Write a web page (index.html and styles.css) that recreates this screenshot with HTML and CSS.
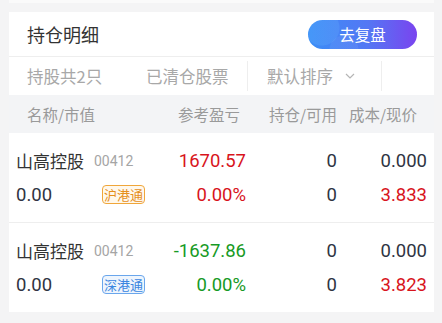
FILE: index.html
```html
<!DOCTYPE html>
<html lang="zh">
<head>
  <meta charset="UTF-8" />
  <title>持仓明细</title>
  <link rel="stylesheet" href="styles.css">
</head>
<body>

<div class="top-strip"></div>

<div class="card">
  <div class="card-head">
    <div class="title">持仓明细</div>
    <button class="review-btn">去复盘</button>
  </div>

  <div class="tabs">
    <div class="tab tab-count">持股共2只</div>
    <div class="tab tab-cleared">已清仓股票</div>
    <div class="tab tab-sort">
      默认排序
      <svg class="chevron" width="10" height="6" viewBox="0 0 10 6"><path d="M1 1l4 4 4-4" fill="none" stroke="#b5b5b5" stroke-width="1.2"/></svg>
    </div>
    <div class="tab-rest"></div>
  </div>

  <div class="table-head">
    <div>名称/市值</div>
    <div class="r">参考盈亏</div>
    <div class="r">持仓/可用</div>
    <div class="r">成本/现价</div>
  </div>

  <div class="row">
    <div class="name-line"><span class="name">山高控股</span><span class="code">00412</span></div>
    <div class="num up">1670.57</div>
    <div class="num">0</div>
    <div class="num">0.000</div>
    <div class="name-line"><span class="value">0.00</span><span class="badge sh">沪港通</span></div>
    <div class="num up">0.00%</div>
    <div class="num">0</div>
    <div class="num up">3.833</div>
  </div>

  <div class="row">
    <div class="name-line"><span class="name">山高控股</span><span class="code">00412</span></div>
    <div class="num down">-1637.86</div>
    <div class="num">0</div>
    <div class="num">0.000</div>
    <div class="name-line"><span class="value">0.00</span><span class="badge sz">深港通</span></div>
    <div class="num down">0.00%</div>
    <div class="num">0</div>
    <div class="num up">3.823</div>
  </div>
</div>

</body>
</html>
```

FILE: styles.css
```css
html, body { margin: 0; padding: 0; background: #f4f4f5; font-family: "Noto Sans CJK SC", sans-serif; }
.top-strip { height: 3px; margin: 0 8px 0 9px; background: #fafafa; }
.card { margin: 9px 8px 0 9px; background: #fff; }

.card-head { height: 44px; display: flex; align-items: center; justify-content: space-between; padding: 0 17px 0 18px; border-bottom: 1px solid #eeeeee; }
.title { font-size: 18px; color: #333; }
.review-btn { width: 109px; height: 29px; border: none; border-radius: 15px; color: #fff; font-family: inherit; font-size: 15.5px; padding: 0; background: radial-gradient(circle at 14px 8px, rgba(110, 185, 255, 0.22) 0, rgba(110, 185, 255, 0.22) 17px, transparent 18px), radial-gradient(circle at 36px 30px, rgba(255, 255, 255, 0.06) 0, rgba(255, 255, 255, 0.06) 14px, transparent 15px), linear-gradient(90deg, #3a8ef6 0%, #5477f4 55%, #7a44ef 100%); }

.tabs { height: 38px; display: flex; align-items: center; font-size: 16.5px; color: #a8a8a8; }
.tab-count { padding-left: 18px; width: 119px; }
.tab-cleared { width: 101px; }
.tab-sort { height: 30px; border-left: 1px solid #eeeeee; border-right: 1px solid #eeeeee; width: 135px; display: flex; align-items: center; padding-left: 19px; box-sizing: border-box; }
.chevron { margin-left: 12px; }

.table-head { height: 38px; background: #f3f4f6; display: grid; grid-template-columns: 123px 90px 97px 80px; align-items: center; padding: 0 17px 0 18px; font-size: 15.5px; color: #9a9a9a; }
.r { text-align: right; }

.row { display: grid; grid-template-columns: 141px 89px 91px 90px; grid-template-rows: 34px 34px; align-content: center; height: 89px; padding: 0 7px; border-bottom: 1px solid #eeeeee; font-family: Roboto, "Noto Sans CJK SC", sans-serif; }
.row:last-child { border-bottom: none; }
.row > div { display: flex; align-items: center; }
.num { justify-content: flex-end; font-size: 18.5px; color: #2f3442; }
.up { color: #d8141c; }
.down { color: #179a25; }
.name { font-family: "Noto Sans CJK SC", sans-serif; font-size: 17px; color: #333; }
.code { font-size: 14px; color: #a5a5a5; margin-left: 10px; }
.value { font-size: 18.5px; color: #2f3442; }
.badge { font-family: "Noto Sans CJK SC", sans-serif; font-size: 13px; line-height: 17px; padding: 0 1px; border-radius: 4px; margin: 0 12px 0 auto; }
.sh { color: #e58f1c; border: 1px solid #f0a63a; background: #fff8ec; }
.sz { color: #3b86e0; border: 1px solid #6aa6ec; background: #eef5fd; }
```
